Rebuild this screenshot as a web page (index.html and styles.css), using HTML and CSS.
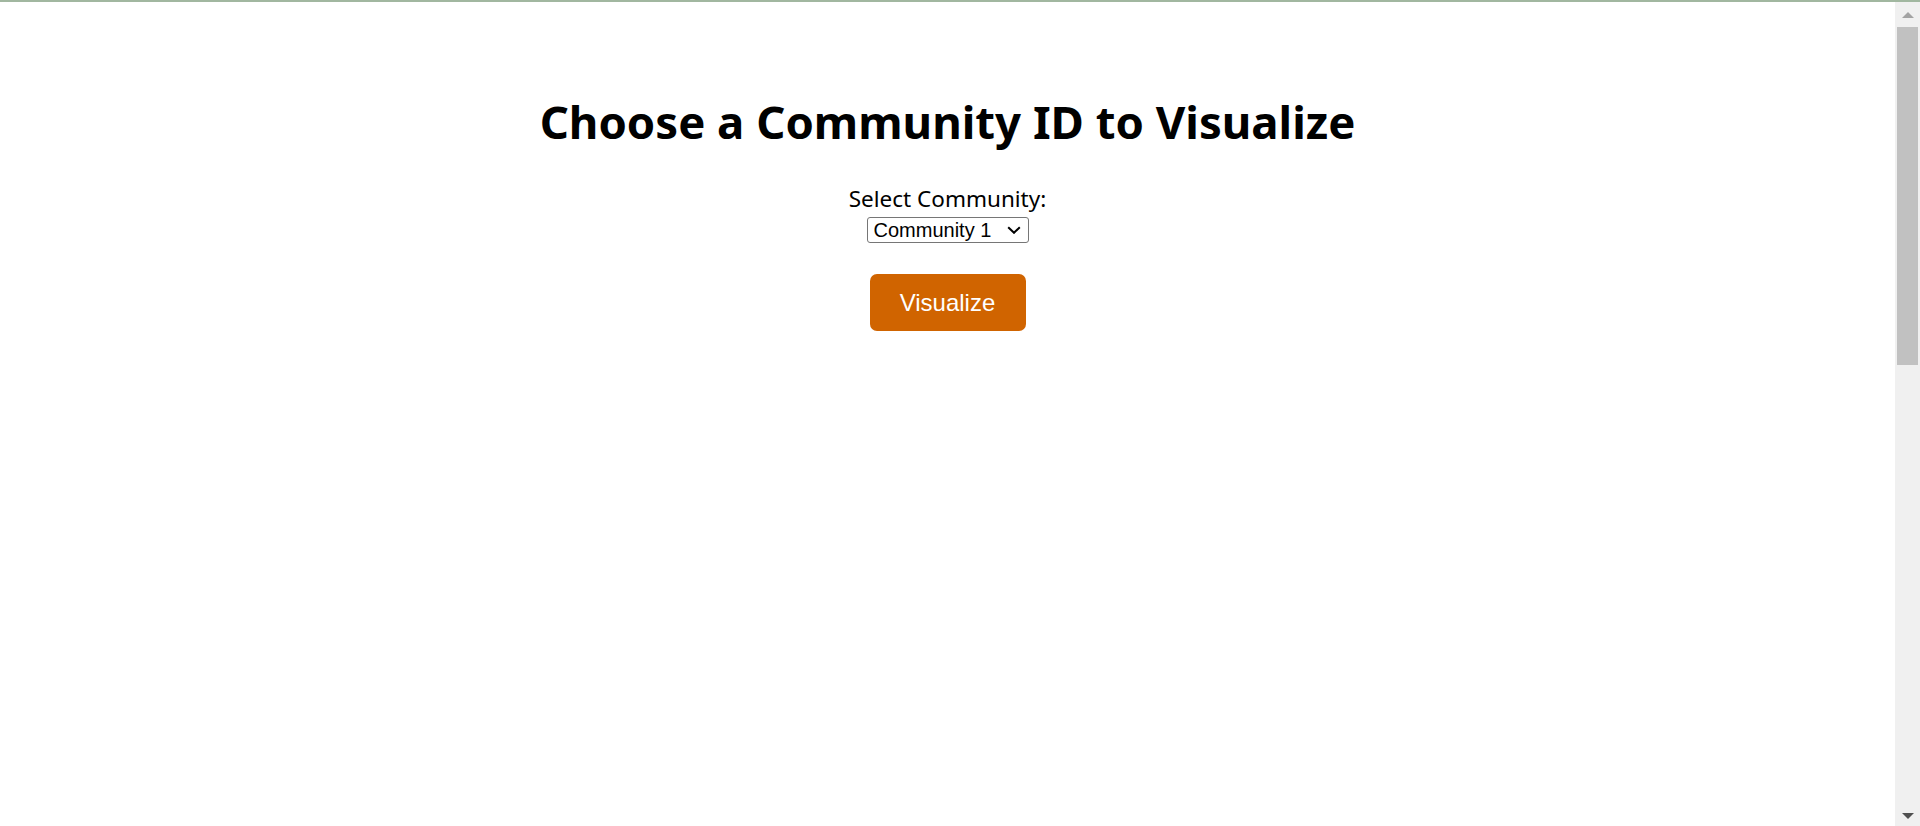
FILE: index.html
```html
<!DOCTYPE html>
<html lang="en">
<head>
<meta charset="utf-8">
<title>Choose a Community</title>
<link rel="stylesheet" href="styles.css">
</head>
<body>
<div class="frame">
  <main class="page">
    <h1 class="title">Choose a Community ID to Visualize</h1>
    <form class="picker">
      <label class="picker-label" for="community">Select Community:</label>
      <select class="picker-select" id="community">
        <option>Community 1</option>
        <option>Community 2</option>
        <option>Community 3</option>
      </select>
      <button type="button" class="picker-button">Visualize</button>
    </form>
  </main>
  <div class="scrollbar">
    <div class="scroll-arrow up"></div>
    <div class="scroll-track">
      <div class="scroll-thumb"></div>
    </div>
    <div class="scroll-arrow down"></div>
  </div>
</div>
</body>
</html>
```

FILE: styles.css
```css
html, body {
  margin: 0;
  padding: 0;
  background: #ffffff;
}

.frame {
  height: 826px;
  box-sizing: border-box;
  border-top: 2px solid #a1b7a0;
  display: grid;
  grid-template-columns: 1fr 25px;
  overflow: hidden;
}

.page {
  text-align: center;
  font-family: "Noto Sans", "Open Sans", sans-serif;
  color: #000;
  padding-top: 89px;
}

.title {
  margin: 0;
  font-size: 45.5px;
  font-weight: 700;
  line-height: 60px;
}

.picker {
  margin-top: 35px;
  display: flex;
  flex-direction: column;
  align-items: center;
}

.picker-label {
  font-size: 22.5px;
  line-height: 26px;
  margin-bottom: 5px;
}

.picker-select {
  -webkit-appearance: none;
  appearance: none;
  width: 162px;
  height: 26px;
  font-family: "Liberation Sans", Arial, sans-serif;
  font-size: 20px;
  border: 1px solid #767676;
  border-radius: 3px;
  color: #000;
  padding: 0 0 0 6px;
  background-color: #fff;
  background-image: url("data:image/svg+xml,%3Csvg xmlns='http://www.w3.org/2000/svg' width='14' height='8' viewBox='0 0 14 8'%3E%3Cpath d='M1.2 1.2l5.8 5.6 5.8-5.6' fill='none' stroke='%23000' stroke-width='2'/%3E%3C/svg%3E");
  background-repeat: no-repeat;
  background-position: right 7px center;
}

.picker-button {
  margin-top: 31px;
  width: 156px;
  height: 57px;
  border: none;
  border-radius: 7px;
  background: #d06400;
  color: #fff;
  font-family: "Liberation Sans", Arial, sans-serif;
  font-size: 24px;
  cursor: pointer;
}

.scrollbar {
  background: #f0f0f0;
  display: flex;
  flex-direction: column;
  align-items: center;
}

.scroll-arrow {
  width: 0;
  height: 0;
  border-left: 6px solid transparent;
  border-right: 6px solid transparent;
}

.scroll-arrow.up {
  margin-top: 10px;
  border-bottom: 6px solid #a3a3a3;
}

.scroll-arrow.down {
  margin-bottom: 7px;
  border-top: 6px solid #505050;
}

.scroll-track {
  flex: 1;
  align-self: stretch;
  padding: 9px 2px 0 2px;
}

.scroll-thumb {
  height: 338px;
  background: #c1c1c1;
}
```
